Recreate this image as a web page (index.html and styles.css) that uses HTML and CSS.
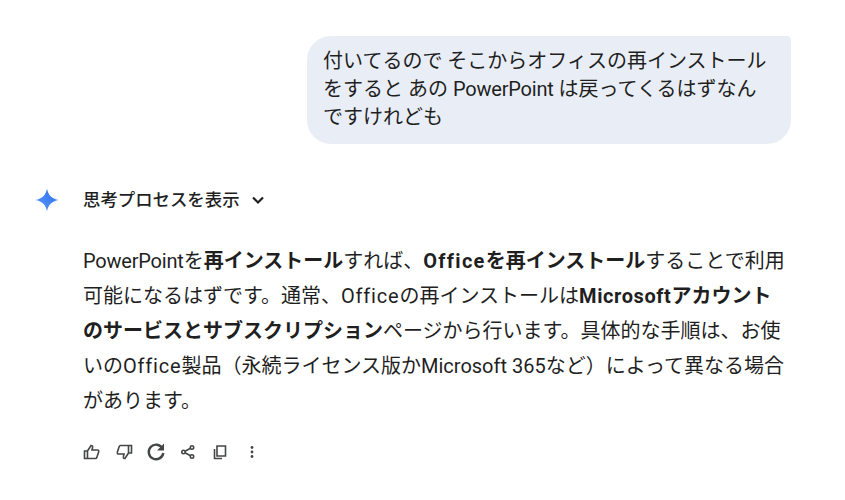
FILE: index.html
```html
<!DOCTYPE html>
<html lang="ja">
<head>
<meta charset="utf-8">
<title>Gemini</title>
<link rel="stylesheet" href="styles.css">
</head>
<body>
<main class="chat">
  <div class="user-row">
    <div class="bubble">付いてるので そこからオフィスの再インストール<br>をすると あの <span class="pp">PowerPoint</span> は戻ってくるはずなん<br>ですけれども</div>
  </div>
  <div class="thought-row">
    <svg class="spark" viewBox="0 0 24 24" width="24" height="24"><defs><linearGradient id="g" x1="0" y1="1" x2="1" y2="0"><stop offset="0" stop-color="#5a9bfa"/><stop offset="1" stop-color="#2a6cf0"/></linearGradient></defs><path fill="url(#g)" d="M12 .5c1 6.400 4.800 10.300 11.500 11.500-6.700 1.200-10.500 5.100-11.500 11.500C11 17.100 7.200 13.200.5 12 7.200 10.800 11 6.900 12 .5z"/></svg>
    <span class="thought-label">思考プロセスを表示</span>
    <svg class="chev" viewBox="0 0 14 14" width="14" height="14"><path d="M2 4.500 7 9.500l5-5" fill="none" stroke="#1f1f1f" stroke-width="2.200"/></svg>
  </div>
  <p class="answer"><span class="pp">PowerPoint</span>を<b>再インストール</b>すれば、<b><span class="office-b">Office</span>を再インストール</b>することで利用<br>可能になるはずです。通常、<span class="office">Office</span>の再インストールは<b><span class="ms-b">Microsoft</span>アカウント</b><br><b>のサービスとサブスクリプション</b>ページから行います。具体的な手順は、お使<br>いの<span class="office">Office</span>製品（永続ライセンス版かMicrosoft 365など）によって異なる場合<br>があります。</p>
  <div class="actions">
    <span class="act"><svg viewBox="0 0 18 18" width="18" height="18"><path class="ln" d="M1.500 8h3v7.500h-3zM4.500 8l3.500-5.500c1.300 0 1.900.9 1.600 2L9 7h5.500c.9 0 1.500.9 1.200 1.700l-1.900 5.800c-.2.600-.7 1-1.300 1H4.500"/></svg></span>
    <span class="act"><svg viewBox="0 0 18 18" width="18" height="18"><path class="ln" d="M16.500 10h-3V2.500h3zM13.500 10 10 15.500c-1.300 0-1.900-.9-1.600-2L9 11H3.500c-.9 0-1.500-.9-1.200-1.700l1.900-5.800c.2-.6.7-1 1.300-1h8.500"/></svg></span>
    <span class="act"><svg viewBox="0 0 20 20" width="20" height="20"><path class="ln thick" d="M16.500 6.500A7.300 7.300 0 1 0 17.300 11"/><path class="fill" d="M18 1.500v7h-7z"/></svg></span>
    <span class="act"><svg viewBox="0 0 16 16" width="16" height="16"><circle class="ln" cx="12" cy="3.500" r="1.700"/><circle class="ln" cx="12" cy="12.500" r="1.700"/><circle class="ln" cx="3.500" cy="8" r="1.700"/><path class="ln" d="M5 7.200 10.500 4.300M5 8.800l5.500 2.900"/></svg></span>
    <span class="act"><svg viewBox="0 0 16 16" width="16" height="16"><path class="ln" d="M5 2h8.500v10H5zM2.500 5v9.500H10"/></svg></span>
    <span class="act"><svg viewBox="0 0 16 16" width="16" height="16"><circle class="fill" cx="8" cy="3.500" r="1.400"/><circle class="fill" cx="8" cy="8" r="1.400"/><circle class="fill" cx="8" cy="12.500" r="1.400"/></svg></span>
  </div>
</main>
</body>
</html>
```
FILE: styles.css
```css
* { box-sizing: border-box; }
html, body { margin: 0; padding: 0; background: #fff; }
body {
  width: 845px;
  height: 500px;
  overflow: hidden;
  color: #1f1f1f;
  font-family: Roboto, "Noto Sans CJK JP", sans-serif;
}
.chat { padding: 36px 54px 0 35px; display: flex; flex-direction: column; }
.user-row { display: flex; justify-content: flex-end; }
.bubble {
  width: 484px;
  height: 108px;
  padding: 11px 16px;
  background: #e9eef6;
  border-radius: 24px 4px 24px 24px;
  font-size: 20px;
  line-height: 28px;
}
.thought-row { display: flex; align-items: center; margin-top: 44px; height: 24px; }
.spark { flex: none; }
.thought-label { margin-left: 24px; font-size: 17.400px; font-weight: 500; line-height: 24px; }
.chev { margin-left: 11px; }
.answer {
  margin: 32px 0 0 48px;
  font-size: 20px;
  line-height: 35px;
  white-space: nowrap;
}
.answer b { font-weight: 700; }
.pp { letter-spacing: -.2px; }
.office { letter-spacing: .8px; }
.office-b { letter-spacing: 1.300px; }
.ms-b { letter-spacing: .6px; }
.actions { display: flex; align-items: center; margin: 21px 0 0 41px; height: 24px; }
.act { width: 32px; display: flex; justify-content: center; }
.ln { fill: none; stroke: #444746; stroke-width: 1.600; }
.thick { stroke-width: 2.400; }
.fill { fill: #444746; }
```
